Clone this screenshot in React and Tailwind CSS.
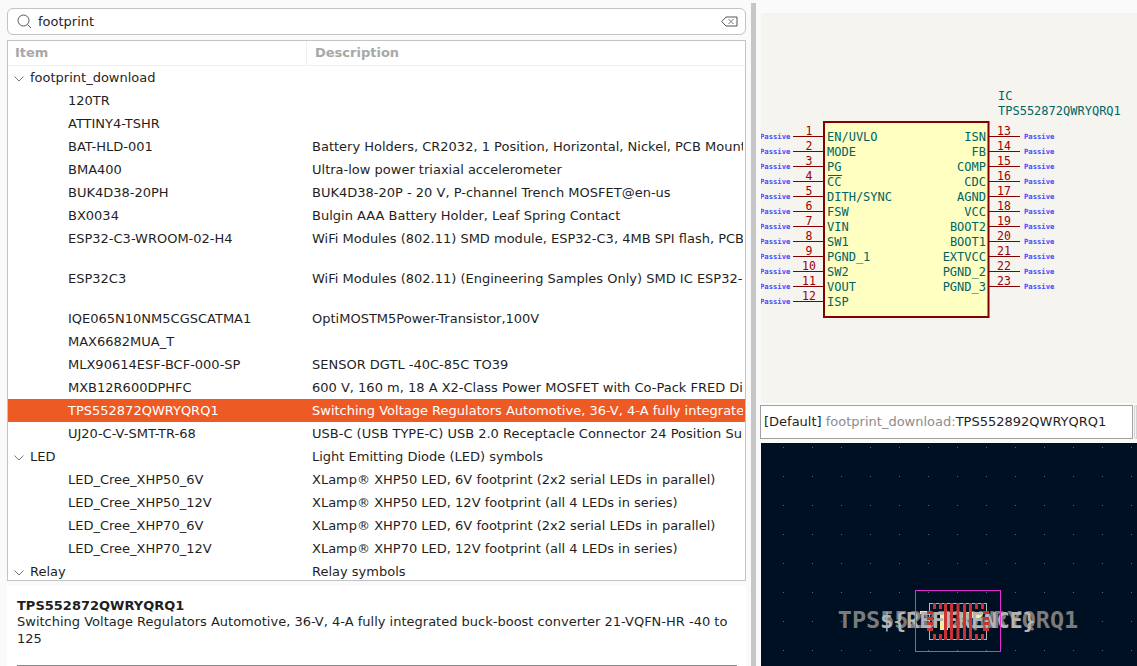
import React from "react";

const rows = [
  { name: "footprint_download", group: true },
  { name: "120TR" },
  { name: "ATTINY4-TSHR" },
  { name: "BAT-HLD-001", desc: "Battery Holders, CR2032, 1 Position, Horizontal, Nickel, PCB Mounting" },
  { name: "BMA400", desc: "Ultra-low power triaxial accelerometer" },
  { name: "BUK4D38-20PH", desc: "BUK4D38-20P - 20 V, P-channel Trench MOSFET@en-us" },
  { name: "BX0034", desc: "Bulgin AAA Battery Holder, Leaf Spring Contact" },
  { name: "ESP32-C3-WROOM-02-H4", desc: "WiFi Modules (802.11) SMD module, ESP32-C3, 4MB SPI flash, PCB antenna" },
  { name: "ESP32C3", desc: "WiFi Modules (802.11) (Engineering Samples Only) SMD IC ESP32-C3", tall: true },
  { name: "IQE065N10NM5CGSCATMA1", desc: "OptiMOSTM5Power-Transistor,100V" },
  { name: "MAX6682MUA_T" },
  { name: "MLX90614ESF-BCF-000-SP", desc: "SENSOR DGTL -40C-85C TO39" },
  { name: "MXB12R600DPHFC", desc: "600 V, 160 m, 18 A X2-Class Power MOSFET with Co-Pack FRED Diode" },
  { name: "TPS552872QWRYQRQ1", desc: "Switching Voltage Regulators Automotive, 36-V, 4-A fully integrated buck", selected: true },
  { name: "UJ20-C-V-SMT-TR-68", desc: "USB-C (USB TYPE-C) USB 2.0 Receptacle Connector 24 Position Surface" },
  { name: "LED", desc: "Light Emitting Diode (LED) symbols", group: true },
  { name: "LED_Cree_XHP50_6V", desc: "XLamp® XHP50 LED, 6V footprint (2x2 serial LEDs in parallel)" },
  { name: "LED_Cree_XHP50_12V", desc: "XLamp® XHP50 LED, 12V footprint (all 4 LEDs in series)" },
  { name: "LED_Cree_XHP70_6V", desc: "XLamp® XHP70 LED, 6V footprint (2x2 serial LEDs in parallel)" },
  { name: "LED_Cree_XHP70_12V", desc: "XLamp® XHP70 LED, 12V footprint (all 4 LEDs in series)" },
  { name: "Relay", desc: "Relay symbols", group: true },
];

const leftPins = ["EN/UVLO", "MODE", "PG", "CC", "DITH/SYNC", "FSW", "VIN", "SW1", "PGND_1", "SW2", "VOUT", "ISP"];
const rightPins = ["ISN", "FB", "COMP", "CDC", "AGND", "VCC", "BOOT2", "BOOT1", "EXTVCC", "PGND_2", "PGND_3"];

function Chevron() {
  return (
    <svg width="10" height="6" viewBox="0 0 10 6" className="ml-[6px] mr-[6px] shrink-0 mt-[2px]">
      <path d="M0.5 0.5 L5 5 L9.5 0.5" fill="none" stroke="#777" strokeWidth="1" />
    </svg>
  );
}

function TreeRow({ row }) {
  return (
    <div
      className={`flex items-center shrink-0 ${row.tall ? "h-[57px]" : "h-[23px]"} ${
        row.selected ? "bg-[#ee5a24] text-white" : "text-[#1f1f1f]"
      }`}
    >
      <div className="w-[304px] shrink-0 flex items-center overflow-hidden whitespace-nowrap">
        {row.group ? <Chevron /> : <div className="w-[60px] shrink-0" />}
        {row.name}
      </div>
      <div className="flex-1 min-w-0 mr-[2px] overflow-hidden whitespace-nowrap">{row.desc}</div>
    </div>
  );
}

function SymbolDrawing() {
  const mono = "'DejaVu Sans Mono', 'Liberation Mono', monospace";
  return (
    <svg width="376" height="390" viewBox="761 13 376 390" className="block">
      <rect x="824" y="122" width="164.5" height="195" fill="#ffffc2" stroke="#840000" strokeWidth="2" />
      <text x="998" y="100" fontFamily={mono} fontSize="12" fill="#006464">IC</text>
      <text x="998" y="115" fontFamily={mono} fontSize="12" fill="#006464">TPS552872QWRYQRQ1</text>
      {leftPins.map((name, i) => {
        const y = 136.5 + i * 15;
        return (
          <g key={name}>
            <line x1="793" y1={y} x2="824" y2={y} stroke="#840000" strokeWidth="1" />
            <text x="809" y={y - 2} textAnchor="middle" fontFamily={mono} fontSize="11.5" fill="#a00000">{i + 1}</text>
            <text x="760" y={y + 2.5} fontFamily={mono} fontSize="7.2" fontWeight="700" fill="#4a4aff">Passive</text>
            <text x="827" y={y + 4} fontFamily={mono} fontSize="12" fill="#006464">{name}</text>
          </g>
        );
      })}
      <line x1="828" y1="175.5" x2="842" y2="175.5" stroke="#006464" strokeWidth="1" />
      {rightPins.map((name, i) => {
        const y = 136.5 + i * 15;
        return (
          <g key={name}>
            <line x1="989" y1={y} x2="1020" y2={y} stroke="#840000" strokeWidth="1" />
            <text x="1004" y={y - 2} textAnchor="middle" fontFamily={mono} fontSize="11.5" fill="#a00000">{i + 13}</text>
            <text x="1024" y={y + 2.5} fontFamily={mono} fontSize="7.2" fontWeight="700" fill="#4a4aff">Passive</text>
            <text x="986" y={y + 4} textAnchor="end" fontFamily={mono} fontSize="12" fill="#006464">{name}</text>
          </g>
        );
      })}
    </svg>
  );
}

function FootprintDrawing() {
  const mono = "'DejaVu Sans Mono', 'Liberation Mono', monospace";
  const dots = [];
  for (let y = 447; y < 666; y += 29) {
    for (let x = 783; x < 1137; x += 29) {
      dots.push(<rect key={`${x}-${y}`} x={x} y={y} width="1" height="1" fill="#5a6675" />);
    }
  }
  const tallX = [944, 950, 956.5, 963, 969];
  const shortX = [933, 939, 975, 981];
  const sideY = [611, 617, 622, 628];
  return (
    <svg width="376" height="223" viewBox="761 443 376 223" className="block">
      {dots}
      <text x="958" y="628" textAnchor="middle" fontFamily={mono} fontSize="23.5" fontWeight="700" fill="#7b7b7b">TPS552872QWRYQRQ1</text>
      <rect x="920" y="611" width="7" height="3" fill="#f2eda1" />
      <rect x="940" y="612" width="8" height="18" fill="#f2eda1" />
      <path d="M956 612 H985 L980 618 H958 Z" fill="#f2eda1" />
      <text x="958" y="628" textAnchor="middle" fontFamily={mono} fontSize="21.5" fontWeight="700" fill="#b4b4b4">{"${REFERENCE}"}</text>
      <rect x="929.5" y="603.5" width="57" height="36" fill="none" stroke="#b4b8bd" strokeWidth="1" />
      {tallX.map((x) => (
        <rect key={x} x={x} y="603" width="3" height="37" fill="#c83434" />
      ))}
      {shortX.map((x) => (
        <g key={x}>
          <rect x={x} y="603" width="3" height="6" fill="#c83434" />
          <rect x={x} y="634" width="3" height="6" fill="#c83434" />
        </g>
      ))}
      {sideY.map((y) => (
        <g key={y}>
          <rect x="927" y={y} width="6" height="3" fill="#c83434" />
          <rect x="983" y={y} width="6" height="3" fill="#c83434" />
        </g>
      ))}
      <rect x="915.5" y="590.5" width="85" height="61" fill="none" stroke="#e32bd0" strokeWidth="1" />
    </svg>
  );
}

export default function App() {
  return (
    <div className="flex w-[1137px] h-[666px] overflow-hidden bg-[#fafafa] font-['DejaVu_Sans',sans-serif] text-[13px] text-[#1f1f1f]">
      {/* linke stran: iskanje, drevo, opis */}
      <div className="w-[751px] shrink-0 flex flex-col pl-[7px] pr-[5px] pt-[8px]">
        <div className="h-[27px] shrink-0 flex items-center bg-white border border-[#c4c4c4] rounded-[6px] pl-[9px] pr-[5px]">
          <svg width="15" height="15" viewBox="0 0 15 15" className="shrink-0">
            <circle cx="6.5" cy="6.5" r="5.5" fill="none" stroke="#555" strokeWidth="1" />
            <path d="M10.5 10.5 L14 14" stroke="#555" strokeWidth="1" />
          </svg>
          <span className="ml-[6px] flex-1">footprint</span>
          <svg width="17" height="11" viewBox="0 0 17 11" className="shrink-0 mr-[2px]">
            <path d="M0.7 5.5 L5 1 H16 V10 H5 Z" fill="none" stroke="#555" strokeWidth="1" />
            <path d="M7.5 3 L12.5 8 M12.5 3 L7.5 8" stroke="#777" strokeWidth="1" />
          </svg>
        </div>
        <div className="mt-[5px] h-[541px] shrink-0 flex flex-col bg-white border border-[#c4c4c4] overflow-hidden">
          <div className="h-[25px] shrink-0 flex items-center font-bold text-[#a8a8a8] border-b border-[#f0f0f0]">
            <div className="w-[299px] h-full flex items-center pl-[7px] border-r border-[#f0f0f0]">Item</div>
            <div className="pl-[8px]">Description</div>
          </div>
          {rows.map((row) => (
            <TreeRow key={row.name} row={row} />
          ))}
        </div>
        <div className="mt-[5px] flex-1 bg-white pl-[10px] pr-[9px] pt-[12px] leading-[16px] flex flex-col">
          <div className="font-bold">TPS552872QWRYQRQ1</div>
          <div className="-mt-[1px] leading-[17px]">Switching Voltage Regulators Automotive, 36-V, 4-A fully integrated buck-boost converter 21-VQFN-HR -40 to 125</div>
          <div className="mt-auto h-px bg-[#8a8a8a]" />
        </div>
      </div>

      {/* ločilnik */}
      <div className="w-[5px] shrink-0 mt-[3px] bg-[#c6c6c6]" />

      {/* desna stran: simbol in odtis */}
      <div className="flex-1 min-w-0 flex flex-col pl-[5px] pt-[13px]">
        <div className="h-[390px] shrink-0 bg-[#f5f4ef]">
          <SymbolDrawing />
        </div>
        <div className="flex items-stretch mt-[2px] -ml-[1px] h-[34px] shrink-0">
          <div className="w-[373px] shrink-0 bg-white border border-[#a0a0a0] flex items-center pl-[3px] whitespace-nowrap">
            <span>[Default]&nbsp;</span>
            <span className="text-[#8c8c8c]">footprint_download:</span>
            <span>TPS552892QWRYQRQ1</span>
          </div>
          <div className="w-[10px] ml-[1px] border border-[#d4d4d4] rounded-l-[6px] bg-[#f6f6f6]" />
        </div>
        <div className="mt-[4px] flex-1 bg-[#001023] overflow-hidden">
          <FootprintDrawing />
        </div>
      </div>
    </div>
  );
}
